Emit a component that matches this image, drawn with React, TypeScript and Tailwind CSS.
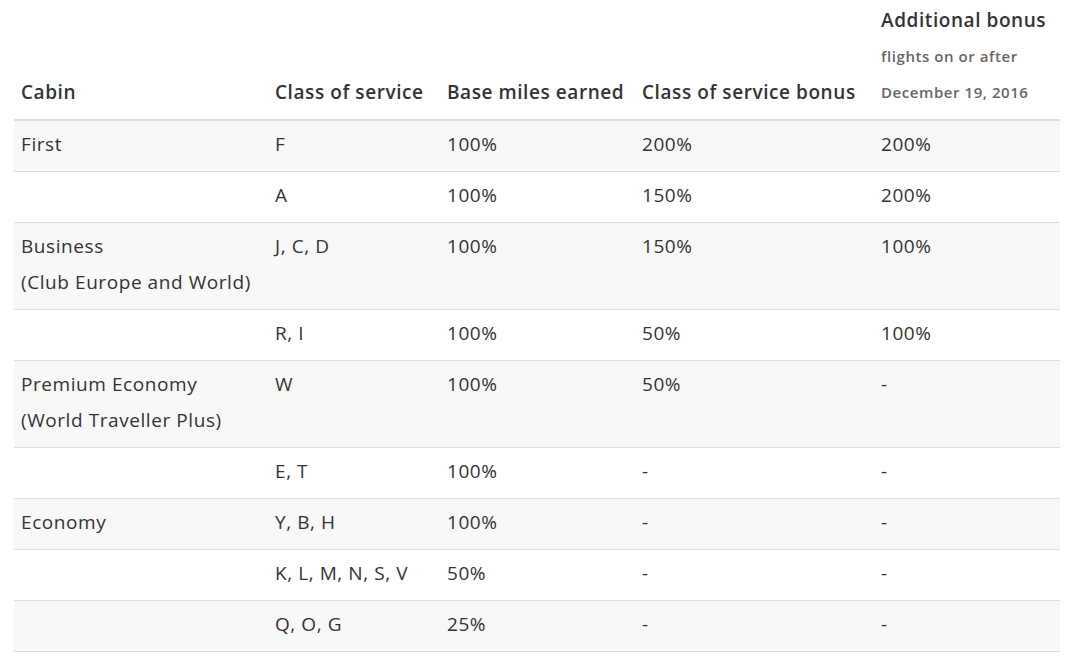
const rows: [string[], string, string, string, string][] = [
  [['First'], 'F', '100%', '200%', '200%'],
  [[], 'A', '100%', '150%', '200%'],
  [['Business', '(Club Europe and World)'], 'J, C, D', '100%', '150%', '100%'],
  [[], 'R, I', '100%', '50%', '100%'],
  [['Premium Economy', '(World Traveller Plus)'], 'W', '100%', '50%', '-'],
  [[], 'E, T', '100%', '-', '-'],
  [['Economy'], 'Y, B, H', '100%', '-', '-'],
  [[], 'K, L, M, N, S, V', '50%', '-', '-'],
  [[], 'Q, O, G', '25%', '-', '-'],
];

export default function App() {
  return (
    <div className="min-h-screen bg-white pl-[14px] pr-[13px] pt-[2px] font-['Open_Sans','Noto_Sans',sans-serif] text-[19px] leading-[36px] tracking-[0.03em] text-[#333]">
      <table className="w-full table-fixed border-collapse">
        <colgroup>
          <col className="w-[254px]" />
          <col className="w-[172px]" />
          <col className="w-[195px]" />
          <col className="w-[239px]" />
          <col />
        </colgroup>
        <thead>
          <tr className="border-b-2 border-[#dddddd] align-bottom text-left">
            <th className="px-[7px] pb-[9px] font-semibold">Cabin</th>
            <th className="px-[7px] pb-[9px] font-semibold whitespace-nowrap">Class of service</th>
            <th className="px-[7px] pb-[9px] font-semibold whitespace-nowrap">Base miles earned</th>
            <th className="px-[7px] pb-[9px] font-semibold whitespace-nowrap">Class of service bonus</th>
            <th className="px-[7px] pb-[9px] font-semibold">
              <div className="whitespace-nowrap">Additional bonus</div>
              <div className="text-[15px] text-[#666] whitespace-nowrap">flights on or after</div>
              <div className="text-[15px] text-[#666] whitespace-nowrap">December 19, 2016</div>
            </th>
          </tr>
        </thead>
        <tbody>
          {rows.map(([cabin, cls, base, bonus, extra], i) => (
            <tr key={i} className={`border-b border-[#dddddd] align-top ${i % 2 === 0 ? 'bg-[#f8f8f8]' : 'bg-white'}`}>
              <td className="px-[7px] pt-[5px] pb-[9px]">
                {cabin.map((c) => (
                  <div key={c} className="whitespace-nowrap">{c}</div>
                ))}
              </td>
              <td className="px-[7px] pt-[5px] pb-[9px] whitespace-nowrap">{cls}</td>
              <td className="px-[7px] pt-[5px] pb-[9px]">{base}</td>
              <td className="px-[7px] pt-[5px] pb-[9px]">{bonus}</td>
              <td className="px-[7px] pt-[5px] pb-[9px]">{extra}</td>
            </tr>
          ))}
        </tbody>
      </table>
    </div>
  );
}
